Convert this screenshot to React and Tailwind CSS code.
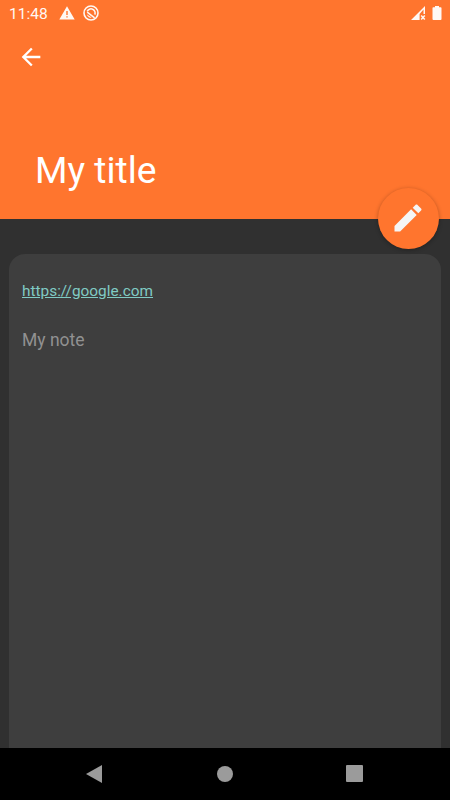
import React from "react";

const StatusBar = () => {
  return (
    <div className="flex h-[27px] items-center pl-[9px] pr-2 text-[#fff8f4]">
      <span className="w-[50px] pt-[2px] text-[15.5px] leading-[25px]">
        11:48
      </span>
      <svg className="mb-px h-[14px] w-[16px]" viewBox="0 0 16 14">
        <path
          fillRule="evenodd"
          fill="currentColor"
          d="M8 0.2L15.7 13.6H0.3ZM7.3 5V9H8.7V5ZM7.3 10.2V11.6H8.7V10.2Z"
        />
      </svg>
      <svg
        className="mb-px ml-2 h-4 w-4"
        viewBox="0 0 16 16"
        fill="none"
        stroke="currentColor"
      >
        <circle cx="8" cy="8" r="7" strokeWidth="1.6" />
        <path d="M4.2 6.4A4.1 4.1 0 1 1 11.8 9.6" strokeWidth="1.5" />
        <path d="M4.2 7.2L11.6 12.9" strokeWidth="1.6" />
        <path
          d="M3.8 9.2L8.6 12.6Q5 13 3.8 9.2Z"
          fill="currentColor"
          stroke="none"
        />
      </svg>
      <svg className="mb-px ml-auto h-[14px] w-[15px]" viewBox="0 0 15 14">
        <path
          fillRule="evenodd"
          fill="currentColor"
          d="M14 0V8H12.5V3.6L8.6 8V14H0Z"
        />
        <path
          d="M10.2 9.4L13.8 13.4M13.8 9.4L10.2 13.4"
          stroke="currentColor"
          strokeWidth="1.5"
        />
      </svg>
      <svg className="mb-px ml-[6px] h-[14px] w-[10px]" viewBox="0 0 10 14">
        <path
          fill="currentColor"
          d="M3 0H7V1.2H8.6Q9.5 1.2 9.5 2.1V13Q9.5 14 8.6 14H1.4Q0.5 14 0.5 13V2.1Q0.5 1.2 1.4 1.2H3Z"
        />
      </svg>
    </div>
  );
};

const NavBar = () => {
  return (
    <nav className="flex h-[52px] items-center justify-between bg-black pb-px pl-[85px] pr-[87px] text-[#9b9b9b]">
      <svg className="h-[18px] w-[18px]" viewBox="0 0 18 18">
        <path fill="currentColor" d="M17 0V18L1 9Z" />
      </svg>
      <div className="ml-px h-4 w-4 rounded-full bg-[#9b9b9b]" />
      <div className="h-[17px] w-[17px] rounded-[1px] bg-[#9b9b9b]" />
    </nav>
  );
};

const App = () => {
  return (
    <div className="flex h-[800px] w-[450px] flex-col overflow-hidden bg-[#303030] font-['Roboto',sans-serif]">
      <header className="relative flex h-[219px] shrink-0 flex-col bg-[#ff752e]">
        <StatusBar />
        <button type="button" className="ml-[17px] mt-[16px] h-7 w-7">
          <svg className="h-7 w-7" viewBox="0 0 24 24" fill="white">
            <path d="M20 11H7.83l5.59-5.59L12 4l-8 8 8 8 1.41-1.41L7.83 13H20v-2z" />
          </svg>
        </button>
        <h1 className="mb-[27px] ml-[35px] mt-auto text-[37.2px] leading-[44px] text-white">
          My title
        </h1>
        <button
          type="button"
          className="absolute -bottom-[30px] right-[11px] flex h-[61px] w-[61px] items-center justify-center rounded-full bg-[#ff752e] pb-px pr-px shadow-[0_1px_4px_rgba(0,0,0,0.3)]"
        >
          <svg className="h-9 w-9" viewBox="0 0 24 24" fill="#f5f5f5">
            <path d="M3 17.25V21h3.75L17.81 9.94l-3.75-3.75L3 17.25zM20.71 7.04c.39-.39.39-1.02 0-1.41l-2.34-2.34c-.39-.39-1.02-.39-1.41 0l-1.83 1.83 3.75 3.75 1.83-1.83z" />
          </svg>
        </button>
      </header>

      <main className="mx-[9px] mt-[35px] flex-1 rounded-t-[16px] bg-[#3e3e3e] px-[13px] pt-[27px]">
        <a
          href="https://google.com"
          className="block text-[15.4px] leading-5 text-[#80cbc4] underline"
        >
          https://google.com
        </a>
        <p className="mt-[27px] text-[17.5px] leading-6 text-[#919191]">
          My note
        </p>
      </main>
      <NavBar />
    </div>
  );
};

export default App;
